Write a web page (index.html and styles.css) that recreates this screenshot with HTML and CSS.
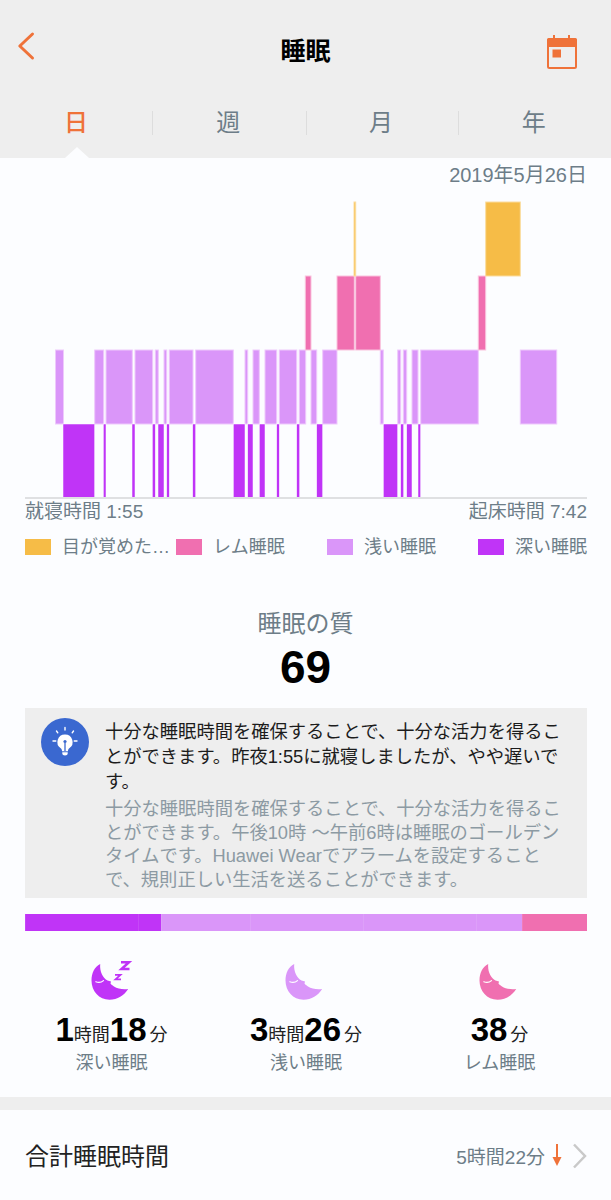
FILE: index.html
```html
<!DOCTYPE html>
<html lang="ja">
<head>
<meta charset="utf-8">
<title>睡眠</title>
<link rel="stylesheet" href="styles.css">
</head>
<body>
<div class="page">
  <header class="topbar">
    <div class="nav">
      <svg class="back" width="20" height="30" viewBox="0 0 20 30"><path d="M15.500 3 2.800 15 15.500 27"/></svg>
      <h1 class="title">睡眠</h1>
      <svg class="cal" width="30" height="34" viewBox="0 0 30 34">
        <path class="cal-fill" d="M6 0h2v3h13v-3h2v3h5a2 2 0 0 1 2 2v7h-30v-7a2 2 0 0 1 2-2h4z"/>
        <rect class="cal-line" x="1" y="4" width="28" height="29" rx="1.500"/>
        <rect class="cal-fill" x="5.500" y="14.500" width="8.500" height="8"/>
      </svg>
    </div>
    <nav class="tabs">
      <span class="tab active">日</span>
      <span class="tab">週</span>
      <span class="tab">月</span>
      <span class="tab">年</span>
    </nav>
  </header>
  <main class="content">
    <div class="date">2019年5月26日</div>
    <svg class="chart" width="611" height="297" viewBox="0 200 611 297">
      <g class="light">
        <rect x="55.500" y="350" width="8" height="74"/><rect x="94.700" y="350" width="9" height="74"/><rect x="106" y="350" width="26.300" height="74"/><rect x="135" y="350" width="17.700" height="74"/><rect x="155.300" y="350" width="3" height="74"/><rect x="164" y="350" width="2.700" height="74"/><rect x="169.300" y="350" width="23.700" height="74"/><rect x="195.700" y="350" width="37.600" height="74"/><rect x="245" y="350" width="2.700" height="74"/><rect x="253" y="350" width="6.300" height="74"/><rect x="265" y="350" width="11.700" height="74"/><rect x="279.300" y="350" width="17.400" height="74"/><rect x="299.300" y="350" width="6.400" height="74"/><rect x="311" y="350" width="5.700" height="74"/><rect x="322.700" y="350" width="14.300" height="74"/><rect x="380.300" y="350" width="3" height="74"/><rect x="397.700" y="350" width="3" height="74"/><rect x="403.300" y="350" width="3.400" height="74"/><rect x="412" y="350" width="6" height="74"/><rect x="420.700" y="350" width="57.600" height="74"/><rect x="520.300" y="350" width="36.400" height="74"/>
      </g>
      <g class="deep">
        <rect x="63" y="424" width="31.700" height="74"/><rect x="103.300" y="424" width="2.700" height="74"/><rect x="132" y="424" width="3" height="74"/><rect x="152.300" y="424" width="3" height="74"/><rect x="158" y="424" width="6" height="74"/><rect x="166.700" y="424" width="2.600" height="74"/><rect x="192.700" y="424" width="3" height="74"/><rect x="233.300" y="424" width="11.700" height="74"/><rect x="247.700" y="424" width="5.300" height="74"/><rect x="259.300" y="424" width="5.700" height="74"/><rect x="276.700" y="424" width="2.600" height="74"/><rect x="296.700" y="424" width="3" height="74"/><rect x="316.700" y="424" width="6" height="74"/><rect x="383.300" y="424" width="14.400" height="74"/><rect x="400.700" y="424" width="3" height="74"/><rect x="406.700" y="424" width="5.300" height="74"/><rect x="418" y="424" width="2.700" height="74"/>
      </g>
      <g class="rem">
        <rect x="305.300" y="276" width="5.700" height="74"/><rect x="337" y="276" width="17.300" height="74"/><rect x="355.700" y="276" width="24.600" height="74"/><rect x="478.300" y="276" width="7.400" height="74"/>
      </g>
      <g class="awake">
        <rect x="354" y="202" width="1.700" height="74"/><rect x="485.700" y="202" width="34.600" height="74"/>
      </g>
    </svg>
    <div class="axis">
      <span>就寝時間 1:55</span>
      <span>起床時間 7:42</span>
    </div>
    <ul class="legend">
      <li class="legend-item"><i class="swatch bg-awake"></i><span class="legend-text">目が覚めた…</span></li>
      <li class="legend-item"><i class="swatch bg-rem"></i><span class="legend-text">レム睡眠</span></li>
      <li class="legend-item"><i class="swatch bg-light"></i><span class="legend-text">浅い睡眠</span></li>
      <li class="legend-item"><i class="swatch bg-deep"></i><span class="legend-text">深い睡眠</span></li>
    </ul>
    <section class="quality">
      <div class="quality-label">睡眠の質</div>
      <div class="quality-score">69</div>
    </section>
    <section class="tip">
      <svg class="tip-icon" width="48" height="48" viewBox="0 0 48 48">
        <circle cx="24" cy="24" r="24" fill="#3a68d0"/>
        <path fill="#fff" d="M24 16.500a7.500 7.500 0 0 0-4.300 13.700c.9.700 1.300 1.500 1.300 3h6c0-1.500.4-2.300 1.300-3A7.500 7.500 0 0 0 24 16.500z"/>
        <path fill="#fff" d="M21.300 34.200h5.400v1.300c0 1.100-1.200 2-2.700 2s-2.700-.9-2.700-2z"/>
        <path stroke="#3a68d0" stroke-width="1.300" fill="none" d="M24 25v8"/>
        <circle cx="24" cy="23.500" r="1.600" fill="#3a68d0"/>
        <path stroke="#fff" stroke-width="1.400" stroke-linecap="round" fill="none" d="M24 9.500v2.500M15.500 13l1.300 1.800M32.500 13l-1.300 1.800M12 23h2.800M33.200 23h2.800"/>
      </svg>
      <div class="tip-body">
        <p class="tip-main">十分な睡眠時間を確保することで、十分な活力を得ることができます。昨夜1:55に就寝しましたが、やや遅いです。</p>
        <p class="tip-sub">十分な睡眠時間を確保することで、十分な活力を得ることができます。午後10時 ～午前6時は睡眠のゴールデンタイムです。Huawei Wearでアラームを設定することで、規則正しい生活を送ることができます。</p>
      </div>
    </section>
    <div class="ratio">
      <i class="bg-deep" style="width:112.500px"></i><i class="bg-deep" style="width:23.500px"></i><i class="bg-light" style="width:89px"></i><i class="bg-light" style="width:113px"></i><i class="bg-light" style="width:113px"></i><i class="bg-light" style="width:45.700px"></i><i class="bg-rem" style="width:65.300px"></i>
    </div>
    <section class="stats">
      <div class="stat">
        <svg class="moon moon-deep" width="42" height="40" viewBox="0 0 42 40">
          <use href="#moon"/>
          <path class="zz-big" d="M30 1.300h8l-7.500 6.800h8"/>
          <path class="zz-small" d="M24 13.800h5.500l-5 4.600h5.500"/>
        </svg>
        <div class="stat-value"><b>1</b>時間<b>18</b><span class="unit-min">分</span></div>
        <div class="stat-label">深い睡眠</div>
      </div>
      <div class="stat">
        <svg class="moon moon-light" width="42" height="40" viewBox="0 0 42 40"><use href="#moon"/></svg>
        <div class="stat-value"><b>3</b>時間<b>26</b><span class="unit-min">分</span></div>
        <div class="stat-label">浅い睡眠</div>
      </div>
      <div class="stat">
        <svg class="moon moon-rem" width="42" height="40" viewBox="0 0 42 40"><use href="#moon"/></svg>
        <div class="stat-value"><b>38</b><span class="unit-min">分</span></div>
        <div class="stat-label">レム睡眠</div>
      </div>
    </section>
    <div class="band"></div>
    <section class="total">
      <span class="total-label">合計睡眠時間</span>
      <span class="total-value">5時間22分</span>
      <svg class="down" width="12" height="24" viewBox="0 0 12 24"><path class="down-line" d="M6 1v15"/><path class="down-head" d="M1.500 14h9L6 23z"/></svg>
      <svg class="chev" width="15" height="26" viewBox="0 0 15 26"><path d="M2 1.500 13 13 2 24.500"/></svg>
    </section>
  </main>
</div>
<svg class="defs" width="0" height="0">
  <defs>
    <g id="moon">
      <path d="M9.200 3C3.500 6 .5 12 .5 19.500.5 30 8 38.700 18.500 38.700c8 0 14.500-4.200 18.700-10.700-5.200.5-10.700 0-14.200-2.500-2-1.500-3-2-3.500-3l.5-2-3.500-1C12 17 8.500 11 9.200 3z"/>
      <path class="moon-eye" d="M4.800 20.800c2.700 1 5.700.6 7.700-1.200"/>
    </g>
  </defs>
</svg>
</body>
</html>
```
FILE: styles.css
```css
* { box-sizing: border-box; }
html, body { margin: 0; padding: 0; }
body {
  background: #fcfdff;
  color: #000;
  font-family: "Liberation Sans", "Noto Sans CJK JP", sans-serif;
  width: 611px;
  overflow-x: hidden;
}
.page { width: 611px; height: 1200px; overflow: hidden; }
.topbar { background: #eeeeee; height: 158px; position: relative; }
.nav {
  display: grid;
  grid-template-columns: 1fr auto 1fr;
  align-items: center;
  height: 102px;
  padding: 0 34px;
}
.back { fill: none; stroke: #ef7239; stroke-width: 3; stroke-linecap: round; stroke-linejoin: round; margin: 0 0 11px -17px; }
.title { margin: 0; font-size: 25px; font-weight: 700; line-height: 1; }
.cal { justify-self: end; margin-top: 2px; }
.cal-fill { fill: #ef7239; }
.cal-line { fill: none; stroke: #ef7239; stroke-width: 2; }
.tabs {
  display: grid;
  grid-template-columns: 152px 153.500px 152px 153.500px;
  height: 24px;
  margin-top: 9px;
}
.tab {
  display: flex;
  align-items: center;
  justify-content: center;
  font-size: 24px;
  line-height: 24px;
  color: #6d7d88;
  border-left: 1px solid #dddddd;
  padding-right: 2px;
}
.tab:first-child { border-left: 0; padding-right: 0; }
.tab.active { color: #ef7239; font-weight: 500; }
.tab.active::after {
  content: "";
  position: absolute;
  left: 65px;
  top: 147px;
  border-left: 12px solid transparent;
  border-right: 12px solid transparent;
  border-bottom: 11px solid #fcfdff;
}
.date {
  height: 42px;
  padding: 6px 24px 0 0;
  text-align: right;
  font-size: 20px;
  line-height: 22px;
  color: #6d7d88;
}
.chart { display: block; height: 297px; }
.chart rect { stroke-width: 1; }
.light { fill: #da96f9; }
.light rect { stroke: #eec9fc; }
.deep { fill: #c034f7; }
.deep rect { stroke: #fcfdff; stroke-width: .5; }
.rem { fill: #f06fb0; }
.rem rect { stroke: #f9c4de; }
.awake { fill: #f6bc47; }
.awake rect { stroke: #fbdc9e; }
.axis {
  display: flex;
  justify-content: space-between;
  margin: 0 24px 0 25px;
  border-top: 2px solid #dfe0e2;
  padding-top: 2px;
  font-size: 19px;
  line-height: 22px;
  color: #6d7d88;
}
.legend {
  list-style: none;
  margin: 12px 0 0;
  padding: 0 0 0 25px;
  display: grid;
  grid-template-columns: 151px 151px 151px auto;
}
.legend-item { display: flex; align-items: center; gap: 11px; height: 24px; }
.swatch { display: block; width: 26px; height: 16px; flex: none; }
.legend-text { font-size: 18px; line-height: 24px; color: #6d7d88; white-space: nowrap; }
.bg-awake { background: #f6bc47; }
.bg-rem { background: #f06fb0; }
.bg-light { background: #da96f9; }
.bg-deep { background: #c034f7; }
.quality { text-align: center; margin-top: 49px; }
.quality-label { font-size: 24px; line-height: 32px; color: #6d7d88; }
.quality-score { font-size: 46px; font-weight: 700; line-height: 52px; margin-top: 1px; }
.tip {
  display: flex;
  margin: 15px 24px 0 25px;
  background: #eeeeee;
  height: 190px;
  padding: 10px 0 0 16px;
  gap: 16px;
}
.tip-icon { flex: none; }
.tip-body { width: 470px; margin-top: 1px; }
.tip-main { margin: 0; font-size: 18.300px; line-height: 25px; color: #1c1c1c; }
.tip-sub { margin: 3px 0 0; font-size: 18.300px; line-height: 23.700px; color: #8c9aa3; }
.ratio { display: flex; margin: 16px 24px 0 25px; height: 17px; }
.ratio i { display: block; box-shadow: inset 1px 0 0 rgba(255, 255, 255, .1); }
.stats {
  display: grid;
  grid-template-columns: 173px 216px 171px;
  margin: 30px 0 0 25px;
  height: 136px;
}
.stat { display: flex; flex-direction: column; align-items: center; }
.moon { display: block; height: 40px; overflow: visible; }
.moon-deep { fill: #c034f7; }
.moon-light { fill: #da96f9; }
.moon-rem { fill: #f06fb0; }
.moon-eye { fill: none; stroke: #fff; stroke-width: 1.200; stroke-linecap: round; }
.zz-big { fill: none; stroke: #c034f7; stroke-width: 2.500; }
.zz-small { fill: none; stroke: #c034f7; stroke-width: 1.800; }
.stat-value { font-size: 18px; line-height: 38px; margin-top: 10px; color: #222; white-space: nowrap; }
.stat-value b { font-size: 33px; font-weight: 700; color: #000; }
.unit-min { margin-left: 3px; }
.stat-label { font-size: 18px; line-height: 24px; color: #6d7d88; margin-top: -3px; }
.band { height: 13px; background: #eeeeee; }
.total {
  display: flex;
  align-items: center;
  height: 94px;
  padding: 0 24px 0 25px;
}
.total-label { font-size: 24px; line-height: 32px; color: #222; flex: 1; }
.total-value { font-size: 19px; color: #6d7d88; margin-bottom: 3px; }
.down { margin: 0 0 4px 6px; }
.down-line { stroke: #ef7239; stroke-width: 2; }
.down-head { fill: #ef7239; }
.chev { margin: 0 0 3px 9px; fill: none; stroke: #c9c9c9; stroke-width: 2.500; }
.defs { position: absolute; }
```
